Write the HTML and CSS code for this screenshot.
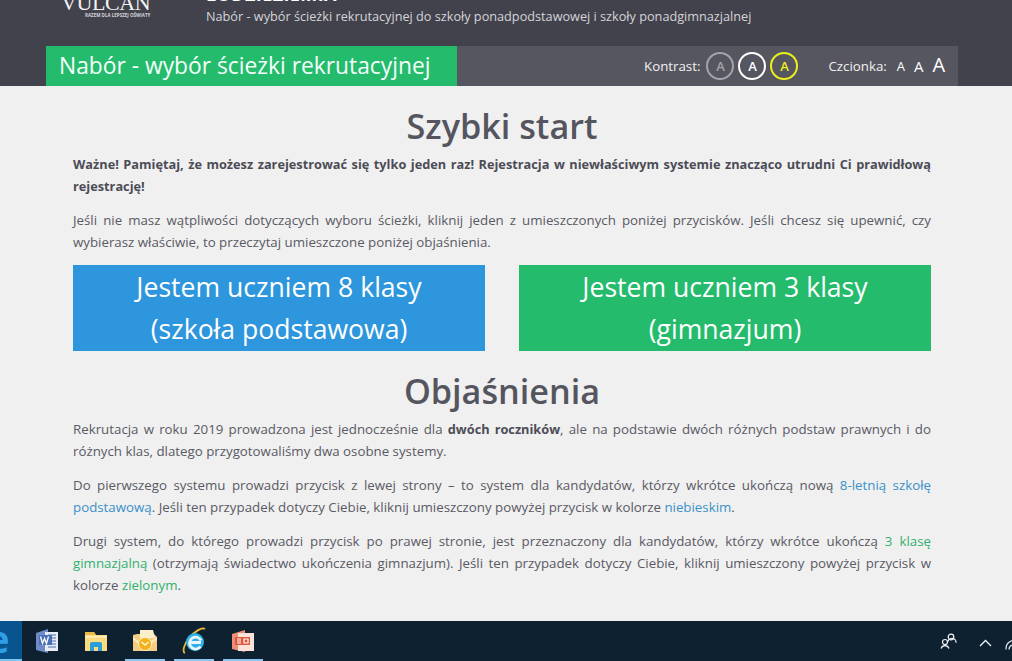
FILE: index.html
```html
<!DOCTYPE html>
<html lang="pl">
<head>
<meta charset="utf-8">
<title>Szybki start</title>
<link rel="stylesheet" href="styles.css">
</head>
<body>
<header class="header">
  <div class="brand">
    <div class="logo">
      <div class="logo-name">VULCAN</div>
      <div class="logo-tag">RAZEM DLA LEPSZEJ OŚWIATY</div>
    </div>
    <div class="brand-text">
      <div class="brand-title">ŁODZIEZIEMIA</div>
      <div class="brand-sub">Nabór - wybór ścieżki rekrutacyjnej do szkoły ponadpodstawowej i szkoły ponadgimnazjalnej</div>
    </div>
  </div>
  <div class="nav">
    <div class="nav-title">Nabór - wybór ścieżki rekrutacyjnej</div>
    <div class="nav-tools">
      <span class="tool-label">Kontrast:</span>
      <span class="contrast contrast-gray">A</span>
      <span class="contrast contrast-white">A</span>
      <span class="contrast contrast-yellow">A</span>
      <span class="tool-label font-label">Czcionka:</span>
      <span class="font-a font-s">A</span>
      <span class="font-a font-m">A</span>
      <span class="font-a font-l">A</span>
    </div>
  </div>
</header>
<main class="main">
  <h1>Szybki start</h1>
  <p><strong>Ważne! Pamiętaj, że możesz zarejestrować się tylko jeden raz! Rejestracja w niewłaściwym systemie znacząco utrudni Ci prawidłową rejestrację!</strong></p>
  <p>Jeśli nie masz wątpliwości dotyczących wyboru ścieżki, kliknij jeden z umieszczonych poniżej przycisków. Jeśli chcesz się upewnić, czy wybierasz właściwie, to przeczytaj umieszczone poniżej objaśnienia.</p>
  <div class="choices">
    <a class="choice choice-blue">Jestem uczniem 8 klasy<br>(szkoła podstawowa)</a>
    <a class="choice choice-green">Jestem uczniem 3 klasy<br>(gimnazjum)</a>
  </div>
  <h1 class="h-second">Objaśnienia</h1>
  <p>Rekrutacja w roku 2019 prowadzona jest jednocześnie dla <strong>dwóch roczników</strong>, ale na podstawie dwóch różnych podstaw prawnych i do różnych klas, dlatego przygotowaliśmy dwa osobne systemy.</p>
  <p>Do pierwszego systemu prowadzi przycisk z lewej strony – to system dla kandydatów, którzy wkrótce ukończą nową <span class="blue">8-letnią szkołę podstawową</span>. Jeśli ten przypadek dotyczy Ciebie, kliknij umieszczony powyżej przycisk w kolorze <span class="blue">niebieskim</span>.</p>
  <p>Drugi system, do którego prowadzi przycisk po prawej stronie, jest przeznaczony dla kandydatów, którzy wkrótce ukończą <span class="green">3 klasę gimnazjalną</span> (otrzymają świadectwo ukończenia gimnazjum). Jeśli ten przypadek dotyczy Ciebie, kliknij umieszczony powyżej przycisk w kolorze <span class="green">zielonym</span>.</p>
</main>
<footer class="taskbar">
  <div class="start"><span class="start-e">e</span></div>
  <div class="task">
    <svg width="26" height="26" viewBox="0 0 26 26"><path d="M2 5 14 1v24L2 22z" fill="#6f8cc6"/><path d="M11 4h13v19H11z" fill="#e8edf5"/><path d="M14 7h8M18 10h4M18 13h4M14 16h8M14 19h8" stroke="#7f9ac6" stroke-width="1.300"/><path d="M5 7h13v10H5z" fill="#4a70b5"/><path d="m6.500 8.500 2 7 2-5 2 5 2-7" fill="none" stroke="#fff" stroke-width="1.300"/></svg>
  </div>
  <div class="task">
    <svg width="24" height="24" viewBox="0 0 24 24"><path d="M1 3h9l2 3h11v16H1z" fill="#f9dc82"/><path d="M1 3h9l2 3H1z" fill="#e9bd45"/><path d="M1 7h22v1.500H1z" fill="#fff1b8"/><path d="M6 22v-7a2 2 0 0 1 2-2h8a2 2 0 0 1 2 2v7h-4v-4h-4v4z" fill="#2c9fd8"/></svg>
  </div>
  <div class="task task-open">
    <svg width="28" height="26" viewBox="0 0 28 26"><path d="M2 7l4-1h17l3 3v14H2z" fill="#f3cd84"/><path d="M9 2h13l2 8H9z" fill="#fbeecb"/><path d="M2 9l11 8 13-8v3l-13 8-11-8z" fill="#fde9b2"/><circle cx="14" cy="16" r="6.500" fill="#f3b21c" stroke="#fff3c4"/><path d="M10.500 14l3.500 3 3.500-3" fill="none" stroke="#fff8dc" stroke-width="1.500"/></svg>
  </div>
  <div class="task task-open">
    <svg width="26" height="28" viewBox="0 0 26 28"><path d="M4 26C1 25 3 17 8 11 14 4 21 0 24 2" fill="none" stroke="#e8b93a" stroke-width="1.800"/><circle cx="14" cy="15" r="9" fill="#2fb0e6"/><path d="M9 15.500h11M19.500 19.500a6 6 0 1 1 .5-6" fill="none" stroke="#eaf8fe" stroke-width="2.800"/></svg>
  </div>
  <div class="task task-open">
    <svg width="26" height="26" viewBox="0 0 26 26"><path d="M2 6 15 2v22L2 21z" fill="#f08e76"/><path d="M8 5h16v18H8z" fill="#fbe3da"/><path d="M5 9h15v8H5z" fill="#e0563c"/><path d="M7 11h4M7 13h4M7 15h4M14 11h4v4h-4z" fill="none" stroke="#fff" stroke-width="1.200"/></svg>
  </div>
  <div class="tray">
    <svg class="tray-people" width="17" height="16" viewBox="0 0 17 16"><g fill="none" stroke="#f2f5f8" stroke-width="1.200"><circle cx="11" cy="4" r="2.800"/><path d="M8 8.800a4 4 0 0 1 8 1"/><circle cx="5" cy="9" r="2.500"/><path d="M1 15.500a4.200 4.200 0 0 1 8 0"/></g></svg>
    <svg class="tray-chevron" width="13" height="8" viewBox="0 0 13 8"><path d="M1 7l5.500-5.500L12 7" fill="none" stroke="#f2f5f8" stroke-width="1.300"/></svg>
    <svg class="tray-wifi" width="7" height="11" viewBox="0 0 7 11"><path d="M1 10.500a9 9 0 0 1 6-9M4 10.500a5 5 0 0 1 3-4.500" fill="none" stroke="#dfe6ec" stroke-width="1.200"/></svg>
  </div>
</footer>
</body>
</html>
```
FILE: styles.css
```css
* { box-sizing: border-box; }
html, body { margin: 0; height: 100%; }
body {
  display: flex;
  flex-direction: column;
  height: 661px;
  overflow: hidden;
  font-family: "Open Sans", sans-serif;
  background: #f0f0f0;
  color: #5a5a64;
}
.header {
  flex: none;
  height: 86px;
  background: #42424c;
  overflow: hidden;
  display: flex;
  flex-direction: column;
  justify-content: flex-end;
}
.brand {
  display: flex;
  height: 46px;
  padding-left: 61px;
  overflow: hidden;
}
.logo {
  width: 145px;
  flex: none;
  margin-top: -10px;
  color: #f2f2f2;
}
.logo-name {
  font-family: "Liberation Serif", serif;
  font-size: 22px;
  line-height: 25px;
  width: 90px;
  letter-spacing: -0.4px;
}
.logo-tag {
  font-size: 4.500px;
  line-height: 6px;
  margin: -3px 0 0 24px;
  font-weight: 700;
  color: #d6d6da;
  white-space: nowrap;
}
.brand-text { margin-top: -16px; }
.brand-title {
  color: #fff;
  font-size: 18px;
  font-weight: 700;
  line-height: 20px;
  letter-spacing: 0.4px;
}
.brand-sub {
  color: #d4d4d8;
  font-size: 12.700px;
  line-height: 16px;
  margin-top: 4px;
  white-space: nowrap;
}
.nav {
  display: flex;
  height: 40px;
  margin: 0 54px 0 46px;
  background: #565660;
}
.nav-title {
  width: 411px;
  flex: none;
  background: #25bb6d;
  color: #f4fff9;
  font-size: 22.800px;
  line-height: 40px;
  padding-left: 13px;
  white-space: nowrap;
}
.nav-tools {
  flex: 1;
  display: flex;
  align-items: center;
  padding-left: 187px;
  color: #f0f0f0;
}
.tool-label { font-size: 13.300px; }
.contrast {
  width: 28px;
  height: 28px;
  border-radius: 50%;
  border: 2px solid;
  display: flex;
  align-items: center;
  justify-content: center;
  font-size: 13px;
  font-weight: 600;
  margin-left: 4px;
}
.contrast-gray { color: #a3a3a9; margin-left: 6px; }
.contrast-white { color: #fff; }
.contrast-yellow { color: #eaf01a; }
.font-label { margin-left: 30px; }
.font-a { color: #fff; line-height: 1; }
.font-s { font-size: 13px; margin-left: 10px; }
.font-m { font-size: 15px; margin-left: 9px; }
.font-l { font-size: 20px; margin-left: 9px; margin-top: -3px; }
.main {
  flex: 1;
  min-height: 0;
  overflow: hidden;
  padding: 0 81px 0 73px;
}
h1 {
  margin: 18px 0 5px;
  text-align: center;
  font-size: 34.200px;
  line-height: 44px;
  font-weight: 600;
  color: #55555f;
}
p {
  margin: 0 0 12px;
  font-size: 13.300px;
  line-height: 22px;
  text-align: justify;
}
strong { font-size: 12.750px; color: #4c4c56; }
.choices {
  display: flex;
  gap: 34px;
}
.choice {
  flex: 1;
  height: 86px;
  padding-top: 1px;
  color: #fff;
  font-size: 26.600px;
  line-height: 42px;
  text-align: center;
}
.choice-blue { background: #2d96dc; }
.choice-green { background: #25bb6d; }
.h-second { margin: 18px 0 5px; }
.blue { color: #3a90c8; }
.green { color: #30b06c; }
.taskbar {
  flex: none;
  height: 40px;
  background: #0e2130;
  display: flex;
  align-items: stretch;
  position: relative;
}
.start {
  width: 22px;
  background: #07548f;
  border-bottom: 2px solid #7ec4ee;
  overflow: hidden;
  color: #2f9ee8;
}
.start-e {
  display: block;
  font-size: 38px;
  font-weight: 700;
  line-height: 34px;
  margin-left: -13px;
}
.task {
  width: 49px;
  display: flex;
  align-items: center;
  justify-content: center;
  position: relative;
}
.task-open::after {
  content: "";
  position: absolute;
  left: 5px;
  right: 4px;
  bottom: 0;
  height: 2px;
  background: #8cc6ec;
}
.tray {
  flex: 1;
  display: flex;
  justify-content: flex-end;
  align-items: center;
  overflow: hidden;
}
.tray-chevron { margin: 3px 0 0 22px; }
.tray-wifi { margin: 6px 0 0 13px; }
```
